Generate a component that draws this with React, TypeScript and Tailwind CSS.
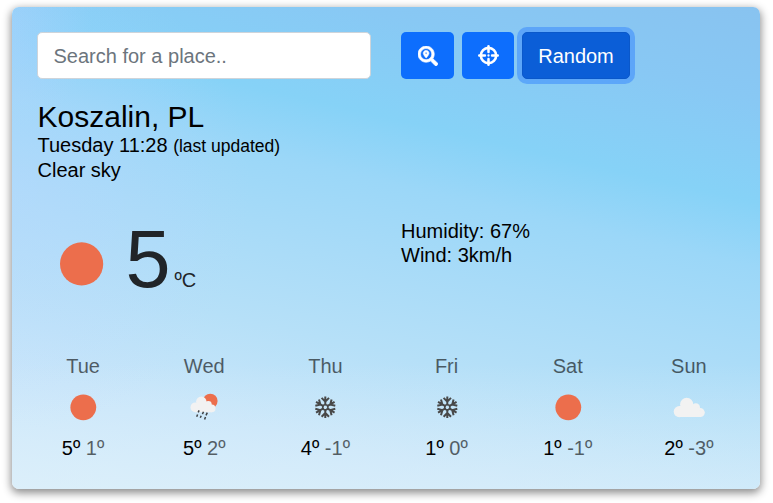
import { FaSearchLocation } from "react-icons/fa";

type Condition = "clear" | "rain" | "snow" | "cloud";

const forecast: { day: string; condition: Condition; max: string; min: string }[] = [
  { day: "Tue", condition: "clear", max: "5º", min: "1º" },
  { day: "Wed", condition: "rain", max: "5º", min: "2º" },
  { day: "Thu", condition: "snow", max: "4º", min: "-1º" },
  { day: "Fri", condition: "snow", max: "1º", min: "0º" },
  { day: "Sat", condition: "clear", max: "1º", min: "-1º" },
  { day: "Sun", condition: "cloud", max: "2º", min: "-3º" },
];

function CrosshairsIcon() {
  return (
    <svg className="size-[21px]" viewBox="0 0 20 20" fill="none" stroke="currentColor">
      <circle cx="10" cy="10" r="7.3" strokeWidth="2.5" />
      <path
        d="M10 1.2V6.6M10 13.4v5.4M1.2 10H6.6M13.4 10h5.4"
        strokeWidth="2.4"
        strokeLinecap="round"
      />
      <circle cx="10" cy="10" r="1.1" fill="currentColor" stroke="none" />
    </svg>
  );
}

function WeatherIcon({ condition }: { condition: Condition }) {
  return (
    <svg className="size-[50px]" viewBox="0 0 50 50">
      {condition === "clear" && <circle cx="25.3" cy="25.3" r="12.9" fill="#ec6e4c" />}
      {condition === "cloud" && (
        <g fill="#f2f2f2">
          <circle cx="15.3" cy="29.6" r="5.6" />
          <circle cx="22.7" cy="22.4" r="6.6" />
          <circle cx="31.8" cy="25.4" r="4.2" />
          <circle cx="36.3" cy="30.6" r="4.5" />
          <path d="M15 24h18l4 6v5.1H15z" />
        </g>
      )}
      {condition === "rain" && (
        <g>
          <circle cx="31.3" cy="19" r="7.3" fill="#ec6e4c" />
          <g fill="#f2f2f2">
            <circle cx="16.4" cy="25.3" r="4.9" />
            <circle cx="22.3" cy="19.6" r="5.2" />
            <circle cx="29.3" cy="22.3" r="3.4" />
            <circle cx="32.7" cy="26.4" r="3.8" />
            <path d="M16 21h15l2 5v4.2H16z" />
          </g>
          <path
            d="M20.1 28.4l-.9 2M18.6 32.4l-.9 2.3M24.5 29.8l-1.1 2.3M22.2 33.8l-.9 2M28.3 30.6l-1.3 2.8M26.5 35l-.9 2.6"
            stroke="#3f4144"
            strokeWidth="1.5"
          />
        </g>
      )}
      {condition === "snow" && (
        <g stroke="#484848" strokeWidth="2" fill="none">
          {[0, 60, 120, 180, 240, 300].map((angle) => (
            <g key={angle} transform={`rotate(${angle} 25.3 25.3)`}>
              <path d="M25.3 23.6V14.6M21.6 15.9l3.7 3.7 3.7-3.7" />
            </g>
          ))}
          <circle cx="25.3" cy="25.3" r="2.7" strokeWidth="1.4" />
        </g>
      )}
    </svg>
  );
}

export default function App() {
  return (
    <div className="h-[503px] w-[773px] overflow-hidden bg-white pt-[7px] pl-3 font-['Liberation_Sans',Arial,sans-serif] text-xl text-black">
      <main className="h-[482px] w-[748px] rounded-[7px] bg-[radial-gradient(ellipse_240px_240px_at_0%_38%,rgba(186,214,255,0.4),transparent),radial-gradient(ellipse_80px_100px_at_0%_4%,rgba(186,208,255,0.36),transparent),linear-gradient(to_top,rgba(224,241,250,0.5),transparent_26%),linear-gradient(193deg,#88c3f0_0%,#88c8f4_14%,#86d2f7_30%,#9bd7f8_40%,#a8dbf8_52%,#b6e0f8_66%,#c9e6fa_82%,#d7edfa_100%)] px-[10.5px] pt-[25px] shadow-[0_3px_8px_1px_rgba(0,0,0,0.45)]">
        <form className="grid grid-cols-2">
          <div className="pr-[15px] pl-[14.5px]">
            <input
              type="text"
              placeholder="Search for a place.."
              className="h-[47px] w-full rounded-[5px] border border-[#ced4da] bg-white px-[15.5px] pt-[2px] text-xl placeholder:text-[#6c757d]"
            />
          </div>
          <div className="flex gap-2 px-[15px] text-white">
            <button type="button" className="flex h-[47px] w-[53px] items-center justify-center rounded-[5px] bg-[#0d6efd]">
              <FaSearchLocation strokeWidth={16} />
            </button>
            <button type="button" className="flex h-[47px] w-[52px] items-center justify-center rounded-[5px] bg-[#0d6efd]">
              <CrosshairsIcon />
            </button>
            <button type="button" className="h-[47px] w-[108px] rounded-[5px] border border-[#0a58ca] bg-[#0b5ed7] shadow-[0_0_0_5px_rgba(49,132,253,0.5)]">
              Random
            </button>
          </div>
        </form>

        <header className="mt-[21px] px-[15px] leading-[25px]">
          <h1 className="h-[33px] text-[30px] leading-[34px]">Koszalin, PL</h1>
          <p className="leading-6">
            Tuesday 11:28 <span className="text-[17.5px]">(last updated)</span>
          </p>
          <p>Clear sky</p>
        </header>

        <section className="mt-9 grid h-[130px] grid-cols-2">
          <div className="flex items-start px-[15px] text-[#212529]">
            <svg className="mt-[1px] h-[88px] w-[88px]" viewBox="0 0 88 88">
              <circle cx="43.6" cy="43.9" r="21.6" fill="#ec6e4c" />
            </svg>
            <div className="flex items-baseline leading-[80px]">
              <span className="text-[81px]">5</span>
              <span className="ml-1">ºC</span>
            </div>
          </div>
          <div className="px-[15px] leading-6">
            <p>Humidity: 67%</p>
            <p>Wind: 3km/h</p>
          </div>
        </section>

        <section className="mt-[3px] grid grid-cols-6 text-center">
          {forecast.map(({ day, condition, max, min }) => (
            <div key={day} className="flex flex-col items-center">
              <p className="mb-[2px] leading-7 opacity-60">{day}</p>
              <WeatherIcon condition={condition} />
              <p className="mt-1 leading-[25px]">
                {max} <span className="opacity-60">{min}</span>
              </p>
            </div>
          ))}
        </section>
      </main>
    </div>
  );
}
